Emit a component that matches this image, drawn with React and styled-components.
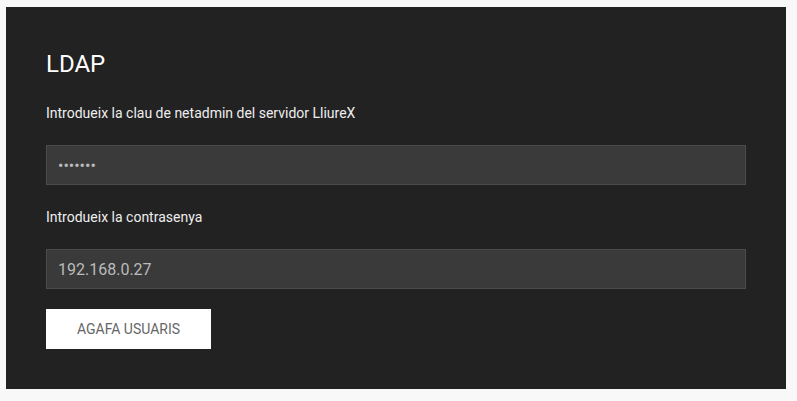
import React from "react";
import styled, { createGlobalStyle } from "styled-components";

const Global = createGlobalStyle`
  html, body { margin: 0; padding: 0; background: #f8f8f8; }
  body { font-family: Roboto, "Liberation Sans", sans-serif; }
  * { box-sizing: border-box; }
`;

const Page = styled.div`
  padding: 7px 11px 12px 6px;
`;

const Panel = styled.section`
  background: #222222;
  padding: 43px 40px 40px;
  display: flex;
  flex-direction: column;
  align-items: flex-start;
`;

const Title = styled.h2`
  margin: 0 0 25px;
  font-size: 24px;
  line-height: 28px;
  font-weight: 400;
  color: #ffffff;
`;

const Label = styled.label`
  display: block;
  font-size: 14px;
  line-height: 20px;
  color: #eeeeee;
  margin-bottom: 22px;
`;

const Input = styled.input`
  width: 100%;
  height: 40px;
  background: #3a3a3a;
  border: 1px solid #4b4b4b;
  color: #bbbbbb;
  font-family: Roboto, "Liberation Sans", sans-serif;
  font-size: 16px;
  padding: 0 11px;
  margin: 0 0 ${(p) => p.$gap}px;
  outline: none;
`;

const Button = styled.button`
  width: 165px;
  height: 40px;
  background: #ffffff;
  border: none;
  color: #666666;
  font-family: Roboto, "Liberation Sans", sans-serif;
  font-size: 14px;
  text-transform: uppercase;
  cursor: pointer;
`;

export default function App() {
  return (
    <>
      <Global />
      <Page>
        <Panel>
          <Title>LDAP</Title>
          <Label>Introdueix la clau de netadmin del servidor LliureX</Label>
          <Input type="password" defaultValue="1234567" $gap={22} />
          <Label>Introdueix la contrasenya</Label>
          <Input type="text" defaultValue="192.168.0.27" $gap={20} />
          <Button>Agafa usuaris</Button>
        </Panel>
      </Page>
    </>
  );
}
